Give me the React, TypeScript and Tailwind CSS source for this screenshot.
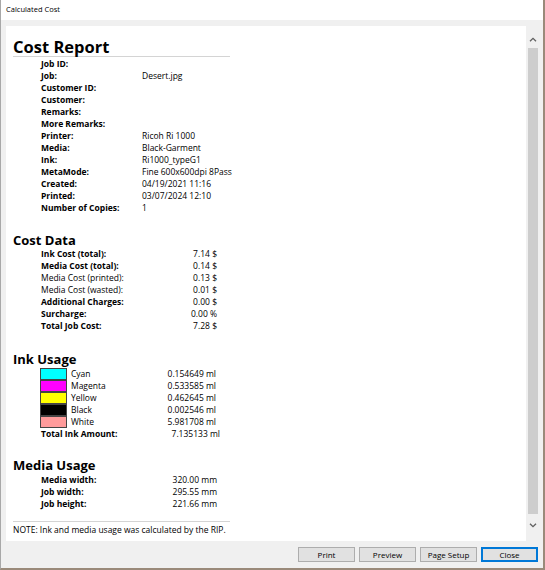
import React from 'react';

// Report data
const jobInfo: [string, string][] = [
    ['Job ID:', ''],
    ['Job:', 'Desert.jpg'],
    ['Customer ID:', ''],
    ['Customer:', ''],
    ['Remarks:', ''],
    ['More Remarks:', ''],
    ['Printer:', 'Ricoh Ri 1000'],
    ['Media:', 'Black-Garment'],
    ['Ink:', 'Ri1000_typeG1'],
    ['MetaMode:', 'Fine 600x600dpi 8Pass'],
    ['Created:', '04/19/2021 11:16'],
    ['Printed:', '03/07/2024 12:10'],
    ['Number of Copies:', '1'],
];

const costData: { label: string; value: string; bold: boolean }[] = [
    { label: 'Ink Cost (total):', value: '7.14 $', bold: true },
    { label: 'Media Cost (total):', value: '0.14 $', bold: true },
    { label: 'Media Cost (printed):', value: '0.13 $', bold: false },
    { label: 'Media Cost (wasted):', value: '0.01 $', bold: false },
    { label: 'Additional Charges:', value: '0.00 $', bold: true },
    { label: 'Surcharge:', value: '0.00 %', bold: true },
    { label: 'Total Job Cost:', value: '7.28 $', bold: true },
];

const inks: { name: string; value: string; swatch: string }[] = [
    { name: 'Cyan', value: '0.154649 ml', swatch: 'bg-[#00ffff]' },
    { name: 'Magenta', value: '0.533585 ml', swatch: 'bg-[#ff00ff]' },
    { name: 'Yellow', value: '0.462645 ml', swatch: 'bg-[#ffff00]' },
    { name: 'Black', value: '0.002546 ml', swatch: 'bg-[#000000]' },
    { name: 'White', value: '5.981708 ml', swatch: 'bg-[#ff9b9b]' },
];

const mediaUsage: [string, string][] = [
    ['Media width:', '320.00 mm'],
    ['Job width:', '295.55 mm'],
    ['Job height:', '221.66 mm'],
];

function Chevron({ down }: { down?: boolean }) {
    return (
        <svg width="8" height="5" viewBox="0 0 8 5" className={down ? 'rotate-180' : ''}>
            <path d="M1 4.3 L4 1.3 L7 4.3" fill="none" stroke="#606060" strokeWidth="1.3" />
        </svg>
    );
}

function WinButton({ label, primary }: { label: string; primary?: boolean }) {
    return (
        <button
            className={`w-[57px] h-[15px] flex items-center justify-center text-[8px] leading-none bg-[#e1e1e1] border ${
                primary ? 'border-[#0078d7] shadow-[inset_0_0_0_1px_#0078d7]' : 'border-[#adadad]'
            }`}
        >
            {label}
        </button>
    );
}

export default function App() {
    return (
        <div className="w-[545px] h-[570px] flex flex-col bg-[#f0f0f0] border-l border-l-[#a8a8a8] border-r-2 border-r-[#9a8a7a] border-b-2 border-b-[#9a8a7a] font-['Open_Sans',sans-serif] text-black overflow-hidden">
            {/* Title bar */}
            <div className="h-[20px] shrink-0 bg-white flex items-center pl-[5px] text-[7.5px]">
                Calculated Cost
            </div>

            {/* Report area */}
            <div className="h-[521px] shrink-0 flex pl-[5px] pt-[6px]">
                <div className="w-[520px] bg-white pl-[7px] pt-[11px]">
                    <h1 className="w-[217px] text-[16.5px] leading-[19px] font-bold border-b border-[#d4d4d4]">
                        Cost Report
                    </h1>
                    <div className="mt-[1px] pl-[28px] text-[8.5px] leading-[12px]">
                        {jobInfo.map(([label, value]) => (
                            <div key={label} className="flex h-[12px]">
                                <span className="w-[101px] font-bold">{label}</span>
                                <span>{value}</span>
                            </div>
                        ))}
                    </div>

                    <h2 className="mt-[19px] text-[13px] leading-[15px] font-bold">Cost Data</h2>
                    <div className="pl-[28px] text-[8.5px] leading-[12px]">
                        {costData.map((row) => (
                            <div key={row.label} className="flex h-[12px]">
                                <span className={`w-[100px] ${row.bold ? 'font-bold' : ''}`}>{row.label}</span>
                                <span className="w-[76px] text-right">{row.value}</span>
                            </div>
                        ))}
                    </div>

                    <h2 className="mt-[20px] text-[13px] leading-[15px] font-bold">Ink Usage</h2>
                    <div className="mt-[1px] pl-[27px] text-[8.5px] leading-[12px]">
                        {inks.map((ink) => (
                            <div key={ink.name} className="flex h-[12px]">
                                <span className={`w-[27px] h-[12px] border border-[#444444] ${ink.swatch}`} />
                                <span className="w-[79px] pl-[4px]">{ink.name}</span>
                                <span className="w-[70px] text-right">{ink.value}</span>
                            </div>
                        ))}
                        <div className="flex h-[12px] pl-[1px]">
                            <span className="w-[109px] font-bold">Total Ink Amount:</span>
                            <span className="w-[70px] text-right">7.135133 ml</span>
                        </div>
                    </div>

                    <h2 className="mt-[18px] text-[13px] leading-[15px] font-bold">Media Usage</h2>
                    <div className="mt-[1px] pl-[28px] text-[8.5px] leading-[12px]">
                        {mediaUsage.map(([label, value]) => (
                            <div key={label} className="flex h-[12px]">
                                <span className="w-[100px] font-bold">{label}</span>
                                <span className="w-[76px] text-right">{value}</span>
                            </div>
                        ))}
                    </div>

                    <div className="mt-[11px] w-[217px] border-t border-[#d4d4d4] pt-[2px] text-[8.5px] leading-[12px]">
                        NOTE: Ink and media usage was calculated by the RIP.
                    </div>
                </div>

                {/* Scrollbar */}
                <div className="w-[14px] flex flex-col bg-[#f0f0f0]">
                    <div className="h-[22px] flex items-center justify-center pt-[5px]">
                        <Chevron />
                    </div>
                    <div className="flex-1 mx-[2px] bg-[#cdcdcd]" />
                    <div className="h-[27px] flex items-center justify-center pb-[5px]">
                        <Chevron down />
                    </div>
                </div>
            </div>

            {/* Buttons */}
            <div className="mt-[6px] flex justify-end gap-[4px] pr-[5px]">
                <WinButton label="Print" />
                <WinButton label="Preview" />
                <WinButton label="Page Setup" />
                <WinButton label="Close" primary />
            </div>
        </div>
    );
}
